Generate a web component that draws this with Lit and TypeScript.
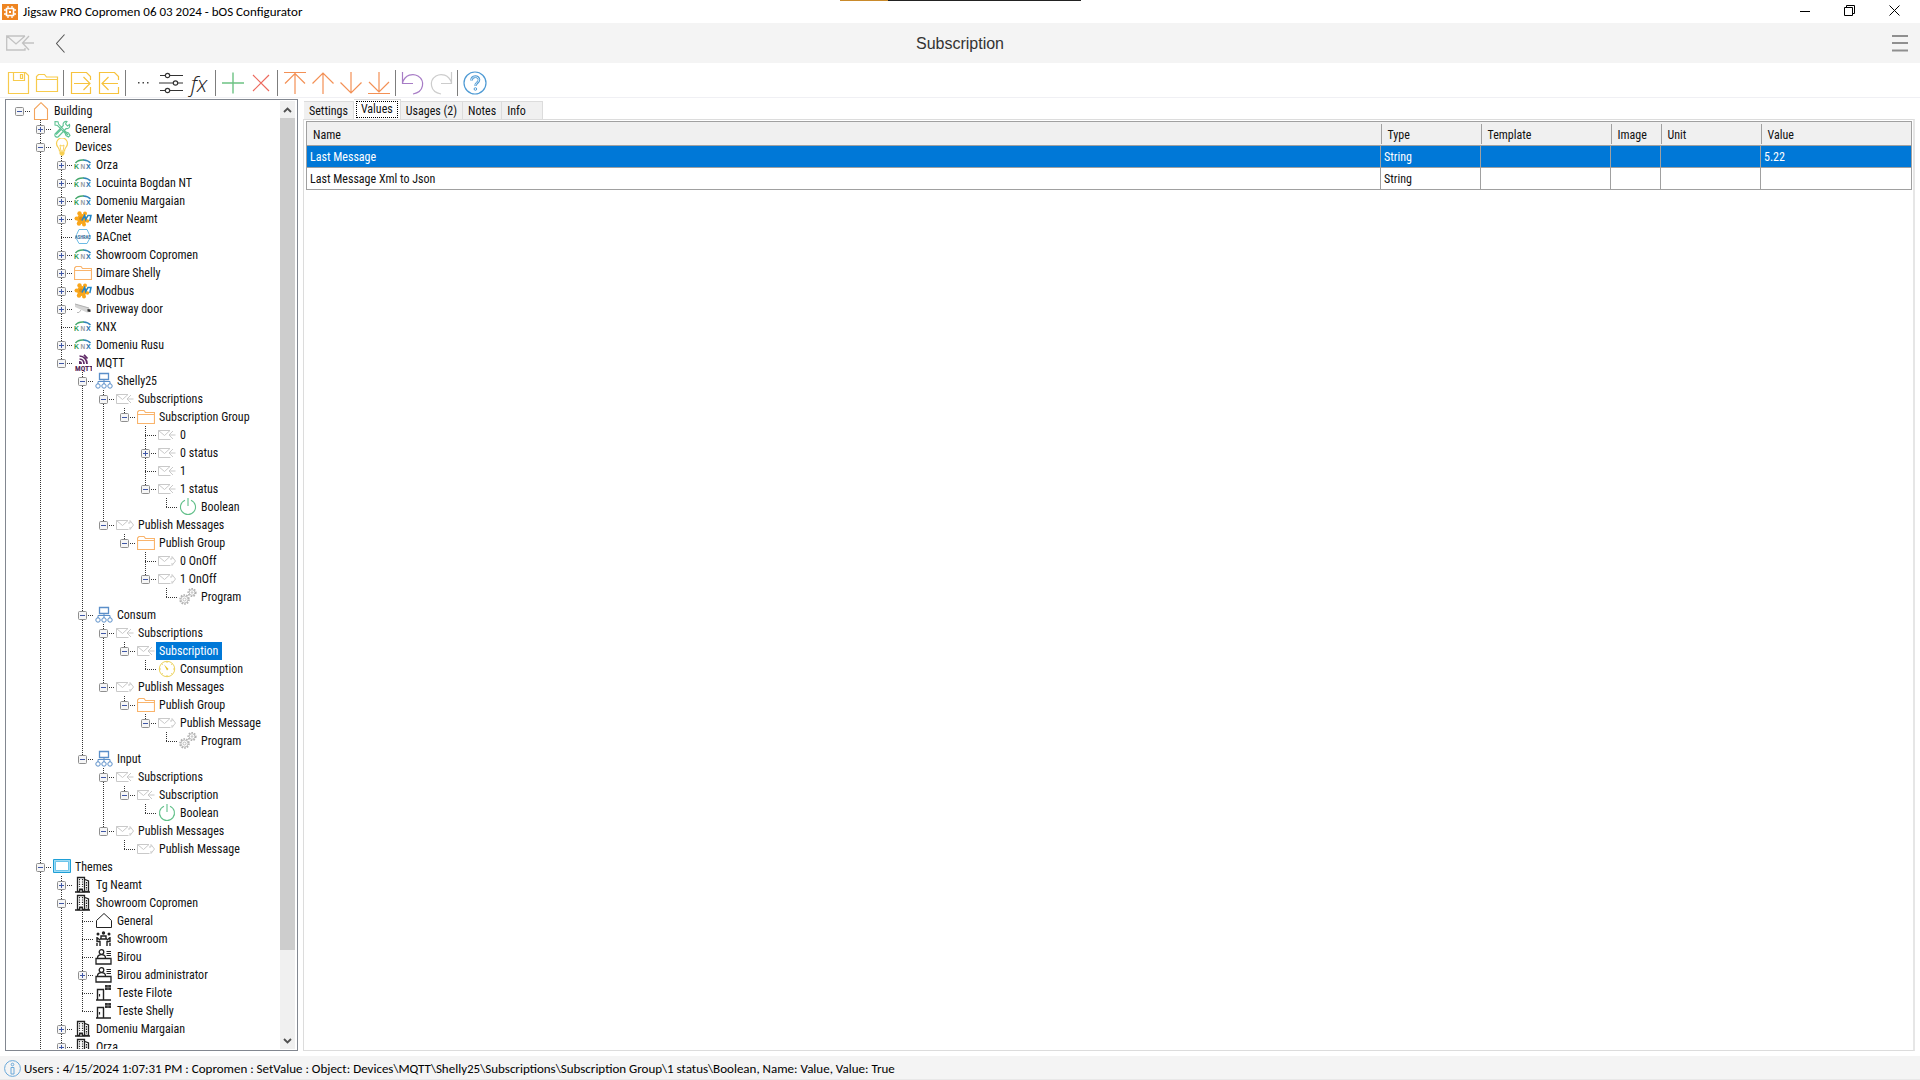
import { LitElement, html, css, svg, nothing, type TemplateResult } from "lit";
import { customElement, property, state } from "lit/decorators.js";
import { classMap } from "lit/directives/class-map.js";

/* ---------- icon artwork ---------- */

const envelope = (tail: unknown) => svg`
  <g fill="none" stroke="#c9c9c9" stroke-width="1">
    <path d="M12 4.500H.5v9h12M.5 4.500l6 5 5.500-5"/>${tail}
  </g>`;

const folder = svg`<g fill="none" stroke="#f9b46c" stroke-width="1.200">
  <path d="M.5 15.500V4L2 2.500h5L8.500 4.500h9v11zM.5 6.500h17"/></g>`;

const officeBuilding = svg`
  <path d="M3.500 1.500h7v14h-7z" fill="#fff" stroke="#222" stroke-width="1.300"/>
  <path d="M11 3.500l3.500 1.500v10.500H11M1 16h15" fill="none" stroke="#222" stroke-width="1.300"/>
  <path d="M5.500 3v8M8.500 3v8" stroke="#222" stroke-width="1.200" stroke-dasharray="1.200 1.200"/>
  <path d="M12.500 6v8" stroke="#222" stroke-width="1.200" stroke-dasharray="1.500 1"/>
  <path d="M5 12.500h4v3.500H5z" fill="#222"/><path d="M6.500 14h1v2h-1z" fill="#fff"/>`;

const desk = svg`
  <g fill="none" stroke="#222" stroke-width="1.300">
    <circle cx="6.500" cy="4" r="2.300"/>
    <path d="M2.500 10c0-4.500 8-4.500 8 0M1 10.500h15v5.500H1z"/>
    <path d="M11.500 3.500h4.500M11.500 5.500h4.500M11.500 7.500h4.500" stroke-width="1"/>
  </g>`;

const door = svg`
  <path d="M2.500 5.500h6V16h-6zM1 16h2M8.500 16H16" fill="none" stroke="#222" stroke-width="1.400"/>
  <path d="M4.500 10v2.500" stroke="#222" stroke-width="1.200"/>
  <path d="M10 1h6v5h-6z" fill="#333"/><path d="M10 3.500h6M13 1v5" stroke="#999" stroke-width=".6"/>`;

const gear = (cx: number, cy: number, r: number) => svg`
  <circle cx=${cx} cy=${cy} r=${r} stroke-width="1.600" stroke-dasharray="1.600 1.200"/>
  <circle cx=${cx} cy=${cy} r=${r - 1}/>
  <circle cx=${cx} cy=${cy} r=${r - 3}/>`;

const ART: Record<string, unknown> = {
  home: svg`<path d="M2.500 7v10.500h13V7L9 .700z" fill="none" stroke="#f3a45c" stroke-width="1.100"/>`,
  tools: svg`<g fill="none" stroke="#5fc394" stroke-width="1.100">
    <path d="M2 1.500l3 .2.600 2.300L13 12l2.500 1L17 15.500 15.500 17 13 15.500 12 13 4.500 5.500 2 5z"/>
    <path d="M16.500 4.500L14.500 6l-2-2 1.500-2.500c-2.500-.5-4.500 1.500-3.700 4L2.500 13.500c-2 2 1 5 3 3l7.700-8c2.500.8 4-1.500 3.300-4z"/>
    </g><path d="M3 14.500l5-5M11 11l4 4" stroke="#5fc394" stroke-width="1.500"/>`,
  bulb: svg`<g fill="none" stroke="#f7cf52" stroke-width="1.200">
    <path d="M6.500 13C6.500 9.500 3.500 9 3.500 5.500a5.500 5.500 0 0 1 11 0c0 3.500-3 4-3 7.500z"/>
    <path d="M7.800 12.500L7 7l2 1 2-1-.8 5.500" stroke-width=".9"/></g>
    <path d="M6.500 13.500h5v2.500L10 17.800H8L6.500 16z" fill="#f7cf52"/>`,
  knx: svg`<path d="M1.500 7C3.500 4.300 6.500 3.700 10 4" fill="none" stroke="#45a76b" stroke-width="1.400"/>
    <path d="M9.500 4c3 .2 5.500 1.300 7 3" fill="none" stroke="#2f84ba" stroke-width="1.400"/>
    <g font-family="Liberation Sans, sans-serif" font-weight="bold" font-size="7">
    <text x="0" y="13" fill="#2f9a53">K</text><text x="6.500" y="13" fill="#959ca1" font-size="6.500">N</text>
    <text x="12" y="13" fill="#1c71ab">X</text></g>`,
  modbus: svg`<g fill="#f9a61b"><circle cx="8" cy="9" r="5"/>
    <circle cx="5.500" cy="3.500" r="2.200"/><circle cx="11" cy="3.500" r="2"/><circle cx="2.500" cy="8.500" r="2"/>
    <circle cx="5" cy="13.500" r="2.200"/><circle cx="10" cy="14.500" r="2"/><circle cx="13.500" cy="11" r="1.800"/></g>
    <circle cx="7" cy="8.500" r="2" fill="#d98c1d"/>
    <path d="M8 10.500L10.500 5.500l1.200 4L14 5.500h3L15.800 11" fill="none" stroke="#1f86c9" stroke-width="1.500"/>`,
  bacnet: svg`<path d="M1.500 9L5 1.500h8L16.500 9 13 15.500H5z" fill="#fff" stroke="#6cbbe6"/>
    <path d="M2.500 6.500h13v4.500h-13z" fill="#fff"/>
    <text x="1" y="10.600" font-family="Roboto Condensed, Liberation Sans, sans-serif" font-weight="bold" font-size="4.600" fill="#35719c">ASHRAE</text>`,
  folder,
  camera: svg`<path d="M1 4l13 3.500 2 1.500v3l-3 .5L1 7z" fill="#d4d4d4"/><path d="M1 4l14 4" stroke="#b0b0b0"/>
    <path d="M13.500 9l3 .5v2.500l-3-.5z" fill="#333"/><path d="M7 10l-2 2.500H3" fill="none" stroke="#bbb"/>`,
  mqtt: svg`<g fill="none" stroke="#5f2a66" stroke-width="1.700">
    <path d="M5.500 2c4.500 0 7.500 3.500 7.500 8M5.500 5c3 0 4.500 2.500 4.500 5M10 .8l3.500 3.700"/></g>
    <path d="M5 7c2.300 0 3 1.300 3 3H5z" fill="#5f2a66"/>
    <text x="1" y="16.500" font-family="Roboto Condensed, Liberation Sans, sans-serif" font-weight="bold" font-size="7.500" fill="#4d2152">MQTT</text>`,
  network: svg`<g fill="none" stroke="#5b8fc9">
    <path d="M4.500 1.500h9v6h-9z" stroke-width="1.300"/><path d="M3 12V9.500h12V12M9 7.500V12"/>
    <circle cx="3" cy="14" r="2.200"/><circle cx="9" cy="14" r="2.200"/><circle cx="15" cy="14" r="2.200"/></g>`,
  mailIn: envelope(svg`<path d="M17.500 9H11M15 5l-4 4 4 4"/>`),
  mailOut: envelope(svg`<path d="M12 7h2V4.500L17.500 9 14 13.500V11"/>`),
  power: svg`<path d="M6 2.200a7.500 7.500 0 1 0 6 0M9 0v8" fill="none" stroke="#62c08a" stroke-width="1.100"/>`,
  gears: svg`<g fill="none" stroke="#b0b0b0" stroke-width=".8">${gear(5.5, 11.5, 4.5)}${gear(13, 4.5, 3.8)}</g>`,
  gauge: svg`<g fill="none" stroke="#ecd25c"><circle cx="9" cy="9" r="7.700"/>
    <path d="M9 1v2M9 15v2M1 9h2M15 9h2M3.500 3.500l1.200 1.200M14.500 3.500l-1.200 1.200M3.500 14.500l1.200-1.200M14.500 14.500l-1.200-1.200"/></g>
    <path d="M6 4.500l4.500 4.500-1.500 1.500z" fill="#e8c42e"/>`,
  screen: svg`<path d="M.5 1.500h17v13H.5z" fill="#9fdcf5" stroke="#1f9fd6"/><path d="M2.500 3.500h13v9h-13z" fill="#fff" stroke="#6cc4ea"/>`,
  building: officeBuilding,
  house: svg`<path d="M1.500 8.500v7h15v-7L9 1.500z" fill="none" stroke="#222"/>`,
  people: svg`<g fill="#222"><circle cx="3" cy="4" r="1.500"/><circle cx="14" cy="4" r="1.500"/><circle cx="8.500" cy="3" r="1.700"/></g>
    <g fill="none" stroke="#222" stroke-width="1.400"><path d="M6 9V6h5v3M5 9h7"/>
    <path d="M2 7v4.500h3V16M2 13v3M15 7v4.500h-3V16M15 13v3M2.500 8l2.500 2M14.500 8L12 10"/></g>`,
  desk,
  door,
};

const TOOL_ART: Record<string, unknown> = {
  save: svg`<path d="M1.500 1.500h17l3 3v18h-20zM6.500 1.500v8h11v-8M13.500 3.500h2v4h-2z" fill="none" stroke="#f7cb4d" stroke-width="1.200"/>`,
  open: svg`<path d="M1.500 20.500v-15L3.500 3.500h6l2 2.500h11v14.500zM1.500 8.500h21" fill="none" stroke="#f7cb4d" stroke-width="1.200"/>`,
  exportFile: svg`<path d="M21.500 9V5.500l-4-4H2.500v21h19V16M5 12.500h16M14.500 6l6.500 6.500-6.500 6.500" fill="none" stroke="#f7c33d" stroke-width="1.200"/>`,
  importFile: svg`<path d="M21.500 9V5.500l-4-4H2.500v21h19V16M21 12.500H5M11.500 6L5 12.500l6.500 6.500" fill="none" stroke="#f7c33d" stroke-width="1.200"/>`,
  more: svg`<path d="M7 11h1.500v1.500H7zM11.500 11h1.500v1.500h-1.500zM16 11h1.500v1.500H16z" fill="#444"/>`,
  sliders: svg`<g fill="none" stroke="#333" stroke-width="1.200"><path d="M1 4.500h5M11 4.500h13M0 12h14M19 12h5M1 19.500h5M11 19.500h13"/>
    <circle cx="8.500" cy="4.500" r="2.200"/><circle cx="16.500" cy="12" r="2.200"/><circle cx="8.500" cy="19.500" r="2.200"/></g>`,
  add: svg`<path d="M12 1.500v21M1 12h22" stroke="#6cc283" stroke-width="1.400"/>`,
  remove: svg`<path d="M4 4l16 16M20 4L4 20" stroke="#ec6a5e" stroke-width="1.200"/>`,
  top: svg`<path d="M1 1.500h22M12 2v21M2 12.500L12 2.500l10 10" fill="none" stroke="#f39055" stroke-width="1.200"/>`,
  up: svg`<path d="M12 2v21M1.500 12.500L12 2l10.500 10.500" fill="none" stroke="#f39055" stroke-width="1.200"/>`,
  down: svg`<path d="M12 1v21M1.500 11.500L12 22l10.500-10.500" fill="none" stroke="#f39055" stroke-width="1.200"/>`,
  bottom: svg`<path d="M1 22.500h22M12 1v20M2 11l10 10 10-10" fill="none" stroke="#f39055" stroke-width="1.200"/>`,
  undo: svg`<path d="M1.500 1v11.500H12M1.500 12C4 3.500 12 2 17 5c7 4.500 6.500 16-5 18" fill="none" stroke="#a77cc6" stroke-width="1.200"/>`,
  redo: svg`<path d="M22.500 1v11.500H12M22.500 12C20 3.500 12 2 7 5c-7 4.500-6.500 16 5 18" fill="none" stroke="#cccccc" stroke-width="1.200"/>`,
  help: svg`<circle cx="12" cy="12" r="11" fill="none" stroke="#4e9ad4" stroke-width="1.200"/>
    <path d="M8.500 9.500c0-5 7.500-5 7.500-.8 0 3-3.500 3-3.500 6" fill="none" stroke="#4e9ad4" stroke-width="2.600"/>
    <path d="M8.500 9.200c0-4.500 7.300-4.500 7.300-.5 0 3-3.300 3-3.300 5.600" fill="none" stroke="#fff" stroke-width=".8"/>
    <circle cx="12.400" cy="18" r="1.300" fill="none" stroke="#4e9ad4"/>`,
};

/* ---------- data ---------- */

interface Node {
  id: number;
  label: string;
  icon: string;
  open: boolean | null;
  children: Node[];
  more?: boolean;
}

let nextId = 0;
const leaf = (label: string, icon: string): Node => ({ id: nextId++, label, icon, open: null, children: [] });
const shut = (label: string, icon: string): Node => ({ ...leaf(label, icon), open: false });
const branch = (label: string, icon: string, ...children: Node[]): Node => ({ ...leaf(label, icon), open: true, children });
const continued = (node: Node): Node => ({ ...node, more: true });

const SELECTED = branch("Subscription", "mailIn", leaf("Consumption", "gauge"));

const TREE: Node = branch("Building", "home",
  shut("General", "tools"),
  branch("Devices", "bulb",
    shut("Orza", "knx"),
    shut("Locuinta Bogdan NT", "knx"),
    shut("Domeniu Margaian", "knx"),
    shut("Meter Neamt", "modbus"),
    leaf("BACnet", "bacnet"),
    shut("Showroom Copromen", "knx"),
    shut("Dimare Shelly", "folder"),
    shut("Modbus", "modbus"),
    shut("Driveway door", "camera"),
    leaf("KNX", "knx"),
    shut("Domeniu Rusu", "knx"),
    branch("MQTT", "mqtt",
      branch("Shelly25", "network",
        branch("Subscriptions", "mailIn",
          branch("Subscription Group", "folder",
            leaf("0", "mailIn"),
            shut("0 status", "mailIn"),
            leaf("1", "mailIn"),
            branch("1 status", "mailIn", leaf("Boolean", "power")))),
        branch("Publish Messages", "mailOut",
          branch("Publish Group", "folder",
            leaf("0 OnOff", "mailOut"),
            branch("1 OnOff", "mailOut", leaf("Program", "gears"))))),
      branch("Consum", "network",
        branch("Subscriptions", "mailIn", SELECTED),
        branch("Publish Messages", "mailOut",
          branch("Publish Group", "folder",
            branch("Publish Message", "mailOut", leaf("Program", "gears"))))),
      branch("Input", "network",
        branch("Subscriptions", "mailIn",
          branch("Subscription", "mailIn", leaf("Boolean", "power"))),
        branch("Publish Messages", "mailOut", leaf("Publish Message", "mailOut"))))),
  continued(branch("Themes", "screen",
    shut("Tg Neamt", "building"),
    branch("Showroom Copromen", "building",
      leaf("General", "house"),
      leaf("Showroom", "people"),
      leaf("Birou", "desk"),
      shut("Birou administrator", "desk"),
      leaf("Teste Filote", "door"),
      leaf("Teste Shelly", "door")),
    shut("Domeniu Margaian", "building"),
    continued(shut("Orza", "building")))));

const TOOLS: [string, string][][] = [
  [["save", "Save"], ["open", "Open"]],
  [["exportFile", "Export"], ["importFile", "Import"]],
  [["more", "More"], ["sliders", "Options"], ["fx", "Expression"]],
  [["add", "Add"], ["remove", "Delete"]],
  [["top", "Move to top"], ["up", "Move up"], ["down", "Move down"], ["bottom", "Move to bottom"]],
  [["undo", "Undo"], ["redo", "Redo"]],
  [["help", "Help"]],
];

const TABS = ["Settings", "Values", "Usages (2)", "Notes", "Info"];
const COLUMNS = ["Name", "Type", "Template", "Image", "Unit", "Value"];
const ROWS = [
  ["Last Message", "String", "", "", "", "5.22"],
  ["Last Message Xml to Json", "String", "", "", "", ""],
];

const buttonReset = css`
  * { box-sizing: border-box; }
  button {
    margin: 0;
    padding: 0;
    border: 0;
    background: none;
    color: inherit;
    font: inherit;
  }
  svg { display: block; flex: none; }
`;

/* ---------- object tree ---------- */

@customElement("object-tree")
export class ObjectTree extends LitElement {
  @property({ attribute: false }) root!: Node;
  @state() private selected = SELECTED.id;

  static styles = [buttonReset, css`
    :host {
      display: flex;
      padding: 1px;
      border: 1px solid #828790;
      background: #fff;
      --v: repeating-linear-gradient(to bottom, #333 0 1px, transparent 1px 2px);
      --h: repeating-linear-gradient(to right, #333 0 1px, transparent 1px 2px);
    }
    .list {
      flex: 1;
      min-width: 0;
      margin: 0;
      padding: 1px 0 0 2px;
      list-style: none;
      overflow: auto;
      scrollbar-width: none;
    }
    .row { display: flex; height: 18px; white-space: nowrap; }
    .guide { flex: none; width: 21px; height: 18px; padding: 5px 0 0 6px; }
    .full { background: var(--v) 10px 0 / 1px 100% no-repeat; }
    .tee { background: var(--v) 10px 0 / 1px 100% no-repeat, var(--h) 10px 9px / 11px 1px no-repeat; }
    .elbow { background: var(--v) 10px 0 / 1px 10px no-repeat, var(--h) 10px 9px / 11px 1px no-repeat; }
    .stem { background: var(--h) 10px 9px / 11px 1px no-repeat; }
    .toggle { display: block; width: 9px; height: 9px; }
    .icon { margin: 0 1px 0 2px; }
    .label { padding: 0 4px 0 3px; line-height: 18px; }
    .selected { background: #0078d7; color: #fff; }
    .scroll { display: flex; flex-direction: column; width: 15px; margin-right: 1px; background: #f0f0f0; }
    .step { display: grid; place-items: center; height: 17px; }
    .track { flex: 1; }
    .thumb { height: 91%; background: #cdcdcd; }
  `];

  private toggle(node: Node) {
    node.open = !node.open;
    this.requestUpdate();
  }

  private scrollRows(delta: number) {
    this.renderRoot.querySelector(".list")?.scrollBy({ top: delta * 18 });
  }

  private rows(node: Node, trail: boolean[], last: boolean): TemplateResult[] {
    const depth = trail.length;
    const ends = last && !node.more;
    const own = depth === 0 ? "stem" : ends ? "elbow" : "tee";
    const row = html`
      <li class="row" role="treeitem" aria-level=${depth + 1} aria-selected=${node.id === this.selected}
        aria-expanded=${node.open ?? nothing}>
        ${trail.map((more) => html`<span class=${classMap({ guide: true, full: more })}></span>`)}
        <span class="guide ${own}">
          ${node.open === null ? nothing : html`
            <button class="toggle" aria-label="Toggle ${node.label}" @click=${() => this.toggle(node)}>
              <svg width="9" height="9" viewBox="0 0 9 9">
                <rect x=".5" y=".5" width="8" height="8" rx="1" fill="#f6f6f6" stroke="#8f8f8f"/>
                <path d=${node.open ? "M2 4.5h5" : "M2 4.5h5M4.5 2v5"} stroke="#3f57a6"/>
              </svg>
            </button>`}
        </span>
        <svg class="icon" width="18" height="18" viewBox="0 0 18 18" aria-hidden="true">${ART[node.icon]}</svg>
        <button class=${classMap({ label: true, selected: node.id === this.selected })}
          @click=${() => (this.selected = node.id)}>${node.label}</button>
      </li>`;
    if (!node.open) return [row];
    const nextTrail = depth === 0 ? [false] : [...trail, !ends];
    return [row, ...node.children.flatMap((child, i) =>
      this.rows(child, nextTrail, i === node.children.length - 1))];
  }

  render() {
    return html`
      <ul class="list" role="tree" aria-label="Project objects">${this.rows(this.root, [], true)}</ul>
      <div class="scroll">
        <button class="step" aria-label="Scroll up" @click=${() => this.scrollRows(-1)}>
          <svg width="9" height="6" viewBox="0 0 9 6"><path d="M1 5l3.500-3.500L8 5" fill="none" stroke="#505050" stroke-width="1.800"/></svg>
        </button>
        <div class="track"><div class="thumb"></div></div>
        <button class="step" aria-label="Scroll down" @click=${() => this.scrollRows(1)}>
          <svg width="9" height="6" viewBox="0 0 9 6"><path d="M1 1l3.500 3.500L8 1" fill="none" stroke="#505050" stroke-width="1.800"/></svg>
        </button>
      </div>`;
  }
}

/* ---------- application shell ---------- */

@customElement("app-root")
export class AppRoot extends LitElement {
  @state() private tab = "Values";
  @state() private row = 0;

  static styles = [buttonReset, css`
    :host {
      display: flex;
      flex-direction: column;
      height: 100vh;
      background: #fff;
      color: #111;
      font: 12px/18px "Roboto Condensed", "Liberation Sans", Arial, sans-serif;
      overflow: hidden;
    }
    .strip {
      position: absolute;
      top: 0;
      left: 43.75%;
      width: 241px;
      height: 1px;
      background: linear-gradient(to right, #c98a2b 48px, #222 48px);
    }
    .titlebar {
      display: flex;
      align-items: center;
      gap: 5px;
      height: 23px;
      padding: 0 3px 0 2px;
      color: #000;
      font: 13px/22px Carlito, Lato, "Open Sans", sans-serif;
    }
    .title { flex: 1; padding-top: 1px; }
    .window { display: flex; align-self: flex-start; }
    .window button { display: grid; place-items: center; width: 45px; height: 21px; }
    .header {
      display: grid;
      grid-template-columns: 1fr auto 1fr;
      align-items: center;
      height: 40px;
      padding: 0 12px;
      background: #f4f4f4;
    }
    .nav { display: flex; align-items: center; gap: 22px; margin-left: -6px; }
    .heading { margin: 0; padding-top: 2px; color: #333; font: 16px/24px "Liberation Sans", Arial, sans-serif; }
    .menu { justify-self: end; }
    .toolbar {
      display: flex;
      align-items: center;
      height: 35px;
      padding: 5px 5px 0;
      border-bottom: 1px solid #f0f0f4;
    }
    .tools { display: flex; align-items: center; }
    .tools + .tools::before {
      content: "";
      width: 1px;
      height: 26px;
      margin: 0 3px 0 2px;
      background: #7d7d7d;
    }
    .tools button { display: grid; place-items: center; width: 28px; height: 26px; }
    .fx { color: #222; font: italic 300 22px/24px "Open Sans", "Noto Sans", sans-serif; }
    .workspace { display: flex; flex: 1; gap: 5px; min-height: 0; padding: 1px 5px 5px; }
    object-tree { flex: none; width: 293px; }
    .details { display: flex; flex-direction: column; flex: 1; min-width: 0; }
    .tabs { display: flex; align-items: flex-end; height: 20px; padding-left: 1px; }
    .tab {
      height: 18px;
      padding: 0 5px;
      border: 1px solid #dcdcdc;
      border-width: 1px 1px 0 0;
      background: #f0f0f0;
      line-height: 18px;
      white-space: nowrap;
    }
    .tab:last-child { padding-right: 16px; }
    .tab.current { height: 20px; padding: 1px 2px 2px; background: #fff; }
    .focus { display: block; padding: 0 4px; border: 1px dotted #000; line-height: 15px; }
    .panel { flex: 1; padding: 1px 1px 1px 2px; border: 1px solid #dcdcdc; border-right: 2px solid #e6e6e6; }
    table { width: 100%; border-collapse: collapse; table-layout: fixed; border: 1px solid #a0a0a0; }
    th, td { overflow: hidden; font-weight: normal; text-align: left; white-space: nowrap; }
    thead tr { height: 24px; background: #f0f0f0; }
    th { padding: 2px 0 0 6px; border-bottom: 1px solid #a0a0a0; }
    th + th { padding-left: 7px; background: linear-gradient(#a0a0a0, #a0a0a0) 0 2px / 1px 20px no-repeat; }
    tbody tr { height: 22px; }
    td { padding: 1px 3px 0; border: 1px solid #a0a0a0; }
    .picked { background: #0078d7; color: #fff; }
    .narrow { width: 50px; }
    .mid { width: 100px; }
    .wide { width: 130px; }
    .value { width: 151px; }
    .status {
      display: flex;
      align-items: center;
      gap: 3px;
      height: 24px;
      padding: 2px 4px 0;
      border-bottom: 1px solid #e8e8e8;
      background: #f4f4f4;
      color: #000;
      font: 13px/20px Carlito, Lato, "Open Sans", sans-serif;
      white-space: nowrap;
    }
  `];

  private columnClass(i: number) {
    return ["", "mid", "wide", "narrow", "mid", "value"][i];
  }

  private renderTool([name, label]: [string, string]) {
    return html`<button aria-label=${label}>${name === "fx"
      ? html`<span class="fx">fx</span>`
      : html`<svg width="24" height="24" viewBox="0 0 24 24">${TOOL_ART[name]}</svg>`}</button>`;
  }

  render() {
    return html`
      <div class="strip"></div>
      <div class="titlebar">
        <svg width="16" height="16" viewBox="0 0 16 16" aria-hidden="true">
          <path d="M0 0h16v16H0z" fill="#ee8421"/>
          <path d="M4.500 4.500h7v7h-7z" fill="none" stroke="#fff" stroke-width="1.600"/>
          <path d="M6 2v2M10 2v2M6 12v2M10 12v2M2 6h2M2 10h2M12 6h2M12 10h2" stroke="#fff" stroke-width="1.300"/>
          <path d="M7 7h2v2H7z" fill="#fff"/>
        </svg>
        <span class="title">Jigsaw PRO Copromen 06 03 2024 - bOS Configurator</span>
        <div class="window">
          <button aria-label="Minimize"><svg width="10" height="10" viewBox="0 0 10 10"><path d="M0 5.500h10" stroke="#000"/></svg></button>
          <button aria-label="Restore"><svg width="11" height="11" viewBox="0 0 11 11"><path d="M.5 2.500h8v8h-8zM2.500 2.500v-2h8v8h-2" fill="none" stroke="#000"/></svg></button>
          <button aria-label="Close"><svg width="11" height="11" viewBox="0 0 11 11"><path d="M.5.5l10 10M10.500.5l-10 10" stroke="#000"/></svg></button>
        </div>
      </div>
      <header class="header">
        <div class="nav">
          <svg width="28" height="16" viewBox="0 0 28 16" aria-hidden="true">
            <path d="M19 1H.700v14H19V13M1 1l9 8 9-8M28 8H17M23 1l-6.500 7 6.500 7" fill="none" stroke="#c2c2c2" stroke-width="1.300"/>
          </svg>
          <button aria-label="Back"><svg width="9" height="19" viewBox="0 0 9 19"><path d="M8.500.5l-8 9 8 9" fill="none" stroke="#555" stroke-width="1.100"/></svg></button>
        </div>
        <h1 class="heading">Subscription</h1>
        <button class="menu" aria-label="Menu">
          <svg width="16" height="18" viewBox="0 0 16 18"><path d="M0 2h16M0 9h16M0 16.500h16" stroke="#8f8f8f" stroke-width="1.800"/></svg>
        </button>
      </header>
      <div class="toolbar" role="toolbar" aria-label="Editing">
        ${TOOLS.map((group) => html`<div class="tools">${group.map((tool) => this.renderTool(tool))}</div>`)}
      </div>
      <main class="workspace">
        <object-tree .root=${TREE}></object-tree>
        <section class="details">
          <div class="tabs" role="tablist">
            ${TABS.map((name) => html`
              <button role="tab" class=${classMap({ tab: true, current: name === this.tab })}
                aria-selected=${name === this.tab} @click=${() => (this.tab = name)}>${name === this.tab
                ? html`<span class="focus">${name}</span>` : name}</button>`)}
          </div>
          <div class="panel" role="tabpanel">
            <table>
              <thead><tr>${COLUMNS.map((c, i) => html`<th scope="col" class=${this.columnClass(i)}>${c}</th>`)}</tr></thead>
              <tbody>
                ${ROWS.map((cells, r) => html`
                  <tr class=${classMap({ picked: r === this.row })} @click=${() => (this.row = r)}>
                    ${cells.map((c) => html`<td>${c}</td>`)}
                  </tr>`)}
              </tbody>
            </table>
          </div>
        </section>
      </main>
      <footer class="status">
        <svg width="17" height="17" viewBox="0 0 17 17" aria-hidden="true">
          <circle cx="8.500" cy="8.500" r="7.900" fill="none" stroke="#6aa9da"/>
          <circle cx="8.500" cy="4.500" r="1.300" fill="none" stroke="#6aa9da"/>
          <path d="M7 7.500h3v6.500H7z" fill="none" stroke="#6aa9da"/>
        </svg>
        <span>Users : 4/15/2024 1:07:31 PM : Copromen : SetValue : Object: Devices\\MQTT\\Shelly25\\Subscriptions\\Subscription Group\\1 status\\Boolean, Name: Value, Value: True</span>
      </footer>`;
  }
}
